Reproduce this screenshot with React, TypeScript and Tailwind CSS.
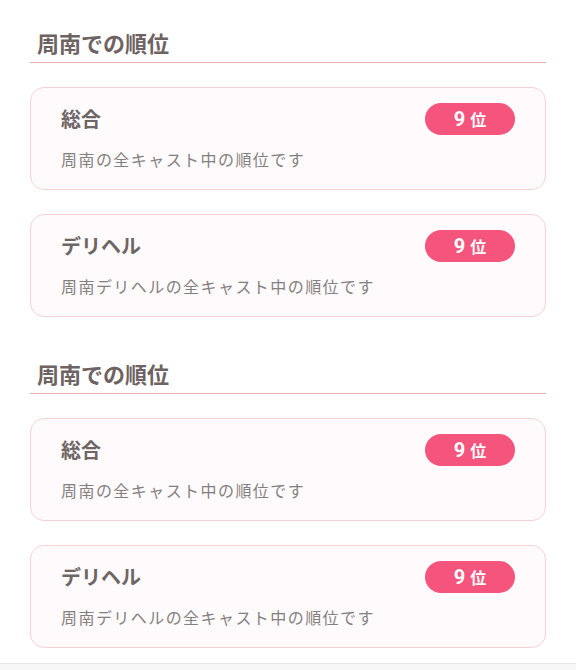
import React from 'react';

interface RankItem {
  title: string;
  description: string;
  rank: number;
}

interface RankSection {
  heading: string;
  items: RankItem[];
}

const sections: RankSection[] = [
  {
    heading: '周南での順位',
    items: [
      { title: '総合', description: '周南の全キャスト中の順位です', rank: 9 },
      { title: 'デリヘル', description: '周南デリヘルの全キャスト中の順位です', rank: 9 },
    ],
  },
  {
    heading: '周南での順位',
    items: [
      { title: '総合', description: '周南の全キャスト中の順位です', rank: 9 },
      { title: 'デリヘル', description: '周南デリヘルの全キャスト中の順位です', rank: 9 },
    ],
  },
];

function RankCard({ item }: { item: RankItem }) {
  return (
    <div className="rounded-[14px] border border-[#f6d3d3] bg-[#fffbfd] pl-[30px] pr-[30px] pt-[15px] pb-[18px]">
      <div className="flex h-[32px] items-center justify-between">
        <div className="text-[20px] font-bold leading-[28px] text-[#6e6565]">{item.title}</div>
        <div className="flex h-[32px] w-[90px] items-center justify-center rounded-full bg-[#f5547c] text-white">
          <span className="text-[20px] font-bold leading-none" style={{ fontFamily: 'Roboto, sans-serif' }}>
            {item.rank}
          </span>
          <span className="ml-[5px] text-[16px] font-bold leading-none">位</span>
        </div>
      </div>
      <div className="mt-[12px] text-[16px] leading-[24px] tracking-[0.09em] text-[#858080]">
        {item.description}
      </div>
    </div>
  );
}

export default function App() {
  return (
    <div
      className="min-h-[670px] bg-white"
      style={{ fontFamily: '"Noto Sans CJK JP", "Noto Sans", sans-serif' }}
    >
      <div className="flex flex-col gap-[42px] px-[30px] pt-[28px] pb-[15px]">
        {sections.map((section, i) => (
          <section key={i}>
            {/* Section heading */}
            <div className="border-b border-[#e9b0b0] pb-[6px] pl-[7px]">
              <h2 className="text-[22px] font-bold leading-[28px] text-[#6e6262]">{section.heading}</h2>
            </div>
            <div className="mt-[24px] flex flex-col gap-[24px]">
              {section.items.map((item, j) => (
                <RankCard key={j} item={item} />
              ))}
            </div>
          </section>
        ))}
      </div>
      <div className="h-[8px] border-t border-[#e6e6e6] bg-[#f7f7f7]" />
    </div>
  );
}
